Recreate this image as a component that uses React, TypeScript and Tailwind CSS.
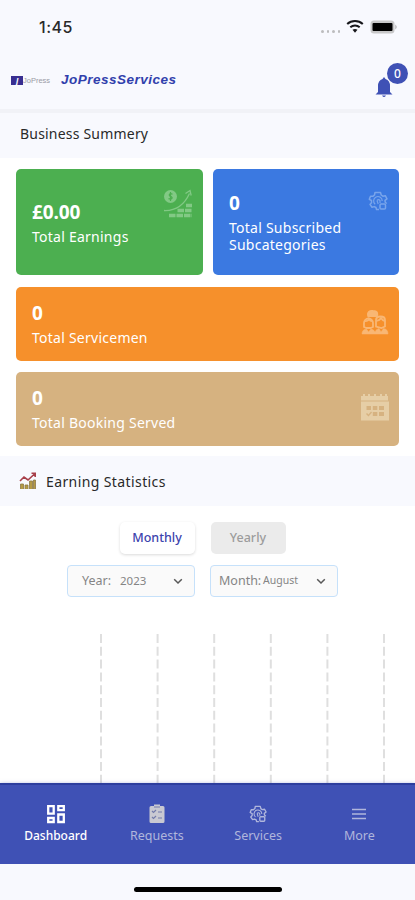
import type { ReactNode } from 'react'

// Provider dashboard: status bar, summary cards, earning chart and bottom tabs.

const CHART_LINES = [0, 1, 2, 3, 4, 5]

function GearIcon({ className }: { className: string }) {
  return (
    <svg viewBox="0 0 20 20" className={className} fill="none" stroke="currentColor" strokeWidth="1.5" strokeLinejoin="round">
      <path d="M11 18.500H8.500L8 16.500 6.200 15.600 4 16.300 2 13.400 3.500 11.700V9.500L1.300 8.300 2.500 5.300 4.900 5.300 6.500 4 7 1.500H12.500L13.200 4 14.800 5.200 17.300 4.700 19 7.800 17 9.300 17.200 11.200 18.700 12.500" />
      <path d="M7.200 13.200a4.300 4.300 0 1 1 7-3.200M9 9.300q1.500-1.500 3 .2v2.500M9 9.500l1.200 3.500" strokeWidth="1.200" />
      <rect x="12" y="13" width="5.500" height="5" rx="1" />
    </svg>
  )
}

function EarningsIcon() {
  return (
    <svg viewBox="0 0 30 30" className="h-[30px] w-[30px]" fill="none" stroke="currentColor">
      <circle cx="7.500" cy="7.500" r="6.500" fill="currentColor" stroke="none" />
      <path d="M9.500 5.200c-3-1.600-4.400 1.200-2 2.200 3 1 1.500 3.500-2 2.200M7.500 3v9" stroke="#4caf50" strokeWidth="1.200" />
      <path d="M1 21.500c12 .5 20-5 25.500-17M22.500 4.500 27 1.500l1.200 5" strokeWidth="1.300" />
      <path d="M23 16.500h6M14.500 21.500h14.500M6 26.500h23" strokeWidth="3.400" strokeDasharray="6.500 1" />
    </svg>
  )
}

function PeopleIcon() {
  return (
    <svg viewBox="0 0 28 26" className="h-[26px] w-7" fill="none" stroke="currentColor" strokeWidth="1.800">
      <path d="M7.500 8C5.500 3 9 1.500 12 2c5 .2 5 3.500 3.500 6" fill="currentColor" />
      <path d="M3 18v-4a4.500 4.500 0 0 1 9 0v4l-2.500 1h-4zM15 17.500V11q0-3.500 4.500-3.500T24 11v6.500L20.500 19z" />
      <path d="M3 12q4 .5 5-2 1.500 2.500 4 2M15 12q4-.5 5-3 1.500 2.500 4 3" />
      <path d="M1 25q0-4.500 4.500-5l2 3 2.500-3q3 .5 4 3 1-3 4-3.500l2 3.500 2.500-3.500Q27 20 27 25z" fill="currentColor" strokeWidth=".5" />
    </svg>
  )
}

function CalendarIcon() {
  return (
    <svg viewBox="0 0 30 28" className="h-7 w-[30px]" fill="currentColor">
      <path d="M1 3h2V1h2v2h3V1h2v2h4V1h2v2h4V1h2v2h3V1h2v2h1v4.500H1zM1 8.500h28v19H1z" />
      <path d="M6.500 13h4.500v4H6.500zM12.800 13h4.500v4h-4.500zM19 13h5v4h-5zM12.800 19h4.500v4h-4.500zM19 19h5v4h-5zM6 21l1-1 1.500 1.500L11 18.500l1 1-3.500 4z" fill="#d6b280" />
    </svg>
  )
}

function StatsIcon() {
  return (
    <svg viewBox="0 0 18 18" className="h-[18px] w-[18px]" fill="none">
      <path d="M1.500 17v-5h3v5M6 17v-4h3v4M10.500 17V9h3v8M14.500 17V8h2v9" fill="#b59a45" stroke="#8d7848" strokeWidth=".8" />
      <path d="m1 9 4-4 4 3 7-6.500M12.500 1.200h3.700V5" stroke="#a8404a" strokeWidth="1.600" />
    </svg>
  )
}

function Chevron() {
  return (
    <svg viewBox="0 0 10 7" className="h-[7px] w-[10px]" fill="none" stroke="#585858" strokeWidth="1.500">
      <path d="m1.200 1.200 3.800 3.800 3.800-3.800" />
    </svg>
  )
}

function SummaryCard({ className, value, label, icon }: { className: string; value: string; label: ReactNode; icon: ReactNode }) {
  return (
    <div className={`flex justify-between rounded-[5px] pl-4 text-white ${className}`}>
      <div>
        <p className="text-[19px] font-bold leading-6 tracking-[-0.1px]">{value}</p>
        <p className="mt-1 text-[14px] leading-[17px] tracking-[0.25px]">{label}</p>
      </div>
      {icon}
    </div>
  )
}

function Tab({ icon, label, active }: { icon: ReactNode; label: string; active?: boolean }) {
  return (
    <div className={`flex flex-1 flex-col items-center pt-[18px] ${active ? 'font-medium text-white' : 'text-[#b0b6dc]'}`}>
      <div className="flex h-[21px] items-center">{icon}</div>
      <span className={`mt-[3px] leading-[18px] ${active ? 'text-[12px]' : 'text-[12.5px]'}`}>{label}</span>
    </div>
  )
}

export default function App() {
  return (
    <div className="flex h-[900px] w-[415px] flex-col overflow-hidden bg-white font-['Noto_Sans',sans-serif] text-[#292929]">
      <header className="h-[109px] shrink-0 bg-[#f8f9fe]">
        <div className="flex h-[54px] items-center justify-between pl-[39px] pr-[18px]">
          <span className="font-['Inter',sans-serif] text-[16px] font-medium tracking-[0.5px]">1:45</span>
          <div className="flex items-center">
            <div className="mr-1.5 mt-2 flex gap-[3px]">
              {[0, 1, 2, 3].map((dot) => (
                <span key={dot} className="h-[3px] w-[2.5px] rounded-full bg-[#bcbcbe]" />
              ))}
            </div>
            <svg viewBox="0 0 18 14" className="mb-0.5 mr-1.5 h-[14px] w-[18px]" fill="none" stroke="#17171b" strokeWidth="2">
              <path d="M1.200 5a11.500 11.500 0 0 1 15.600 0M4.300 8.200a7 7 0 0 1 9.400 0" />
              <path d="m6.500 10.800 2.500 3 2.500-3q-2.500-1.600-5 0" fill="#17171b" stroke="none" />
            </svg>
            <svg viewBox="0 0 27 14" className="h-[14px] w-[27px]">
              <rect x=".5" y=".5" width="24" height="13" rx="3.500" fill="#c7c7c8" />
              <rect x="2.500" y="3" width="20" height="8" rx="1" />
              <path d="M25.500 4.500q2 2.500 0 5z" fill="#999" />
            </svg>
          </div>
        </div>
        <div className="flex h-[53px] items-center justify-between pl-[11px] pr-[7px]">
          <div className="flex items-center">
            <span className="flex h-[9px] w-3 items-center justify-center bg-[#392f91] text-[8px] font-bold italic text-white">J</span>
            <span className="w-[38px] font-['Liberation_Sans',sans-serif] text-[7.5px] text-[#9a9ba5]">JoPress</span>
            <span className="font-['Liberation_Sans',sans-serif] text-[13.5px] font-bold italic tracking-[0.5px] text-[#3040ac]">JoPressServices</span>
          </div>
          <div className="relative h-[35px] w-[33px]">
            <svg viewBox="0 0 18 21" className="absolute bottom-0 left-0 h-[21px] w-[18px]" fill="#3f51b5">
              <path d="M9 0 10.500 2Q15 3.500 15 9v6l2.500 2.500H.500L3 15V9Q3 3.500 7.500 2zM7 18.500h4q-2 3-4 0" />
            </svg>
            <span className="absolute right-0 top-0 flex h-[21px] w-[21px] items-center justify-center rounded-full bg-[#3f51b5] text-[12px] font-medium text-white">0</span>
          </div>
        </div>
      </header>

      <h2 className="h-[49px] shrink-0 border-t-4 border-[#f1f2f7] bg-[#f8f9fe] pl-5 pt-[9px] text-[14px] leading-6 tracking-[0.2px]">Business Summery</h2>

      <section className="h-[298px] shrink-0 px-4 pt-[11px]">
        <div className="flex gap-2.5">
          <SummaryCard
            className="h-[106px] w-[187px] bg-[#4caf50] pr-[10px] pt-[31px]"
            value="£0.00"
            label="Total Earnings"
            icon={<div className="-mt-[11px] text-[#82c985]"><EarningsIcon /></div>}
          />
          <SummaryCard
            className="h-[106px] w-[186px] bg-[#3b79e1] pr-[11px] pt-[22px]"
            value="0"
            label={<>Total Subscribed<br />Subcategories</>}
            icon={<GearIcon className="h-5 w-5 text-[#79a5eb]" />}
          />
        </div>
        <SummaryCard className="mt-3 h-[74px] bg-[#f6902b] pr-[10px] pt-[14px]" value="0" label="Total Servicemen" icon={<div className="mt-2 text-[#f9b774]"><PeopleIcon /></div>} />
        <SummaryCard className="mt-[11px] h-[74px] bg-[#d6b280] pr-[9px] pt-[14px]" value="0" label="Total Booking Served" icon={<div className="mt-[7px] text-[#e6cea6]"><CalendarIcon /></div>} />
      </section>

      <h2 className="flex h-[50px] shrink-0 items-center gap-[9px] bg-[#f8f9fe] pl-[19px] text-[14px] tracking-[0.4px]">
        <StatsIcon />
        Earning Statistics
      </h2>

      <section className="flex h-[277px] shrink-0 flex-col items-center pt-4">
        <div className="flex gap-4 pr-2.5">
          <button className="h-8 w-[75px] rounded-[5px] bg-white text-[12.5px] font-medium text-[#3c43ad] shadow-[0_1px_3px_rgba(0,0,0,0.15)]">Monthly</button>
          <button className="h-8 w-[75px] rounded-[5px] bg-[#ebebeb] text-[12.5px] font-medium text-[#9c9c9c]">Yearly</button>
        </div>
        <div className="mt-[11px] flex gap-[15px] pr-2.5 text-[#858585]">
          <div className="flex h-8 w-32 items-center rounded-[4px] border border-[#c6e1fa] bg-[#fafafa] pl-3.5 pr-[11px]">
            <span className="w-[38px] text-[12.5px]">Year:</span>
            <span className="flex-1 text-[11.5px]">2023</span>
            <Chevron />
          </div>
          <div className="flex h-8 w-32 items-center rounded-[4px] border border-[#c6e1fa] bg-[#fafafa] pl-2 pr-[11px]">
            <span className="w-[44px] text-[12.5px]">Month:</span>
            <span className="flex-1 text-[10.5px]">August</span>
            <Chevron />
          </div>
        </div>
        <svg viewBox="0 0 415 149" className="mt-[37px] h-[149px] w-[415px] shrink-0" stroke="#dfdfdf" strokeWidth="2" strokeDasharray="9 3.800">
          {CHART_LINES.map((line) => (
            <path key={line} d={`M${101 + line * 56.6} 0v149`} />
          ))}
        </svg>
      </section>

      <nav className="flex h-[81px] shrink-0 border-t-2 border-[#2d3e9e] bg-[#3f51b5] px-[5px] shadow-[0_1px_4px_rgba(48,65,166,0.5)]">
        <Tab
          active
          label="Dashboard"
          icon={<svg viewBox="0 0 20 20" className="h-5 w-5" fill="none" stroke="currentColor" strokeWidth="2.300"><path d="M2.200 2.200h5.500v7.500H2.200zM12.300 2.200h5.500v4h-5.500zM12.300 10.500h5.500v7.500h-5.500zM2.200 14h5.500v4H2.200z" /></svg>}
        />
        <Tab
          label="Requests"
          icon={<svg viewBox="0 0 16 20" className="h-5 w-4" fill="#c9c9d2"><path d="M2 2h3V.500h6V2h3q1.500 0 1.500 1.500v14Q15.500 19 14 19H2Q.500 19 .500 17.500v-14Q.500 2 2 2" /><path d="m3 7 1.500 1.500L7 6M9 8h4M3 13l1.500 1.500L7 12M9 14h4M5 3h6" fill="none" stroke="#747cab" strokeWidth="1.200" /></svg>}
        />
        <Tab label="Services" icon={<GearIcon className="h-[18px] w-[18px]" />} />
        <Tab label="More" icon={<svg viewBox="0 0 14 12" className="h-3 w-[14px]" stroke="currentColor" strokeWidth="1.400"><path d="M0 1.500h14M0 6h14M0 10.500h14" /></svg>} />
      </nav>
      <footer className="flex flex-1 justify-center bg-[#f8f9fe] pt-[23px]">
        <div className="h-[5px] w-[148px] rounded-full bg-black" />
      </footer>
    </div>
  )
}
